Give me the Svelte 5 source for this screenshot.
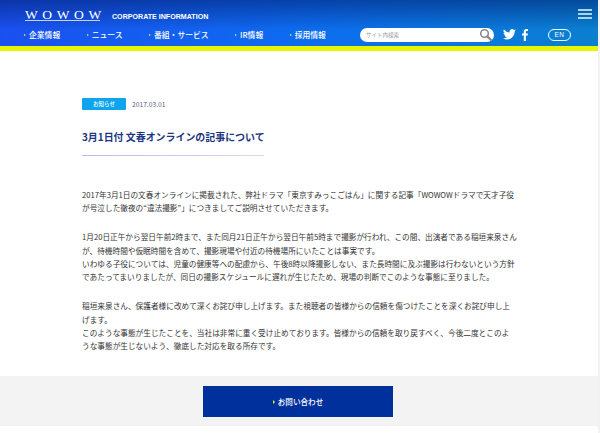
<script>
	const nav = ['企業情報', 'ニュース', '番組・サービス', 'IR情報', '採用情報']
</script>

<div class="page">
	<header class="header">
		<div class="header__top">
			<span class="logo">WOWOW</span>
			<span class="corp">CORPORATE INFORMATION</span>
			<div class="burger" aria-label="メニュー"><i></i><i></i><i></i></div>
		</div>
		<div class="header__nav">
			<ul class="nav">
				{#each nav as item}
					<li class="nav__item">{item}</li>
				{/each}
			</ul>
			<div class="search">
				<span>サイト内検索</span>
				<svg width="13" height="13" viewBox="0 0 13 13" fill="none" stroke="#8a8a8a">
					<circle cx="5.5" cy="5.5" r="3.8" stroke-width="1.6" />
					<path d="M8.4 8.4 L12 12" stroke-width="2.2" stroke-linecap="round" />
				</svg>
			</div>
			<svg class="tw" width="13" height="11" viewBox="0 0 24 20" fill="#fff">
				<path d="M24 2.4a9.800 9.800 0 0 1-2.800.8 4.900 4.900 0 0 0 2.150-2.700 9.800 9.800 0 0 1-3.100 1.200A4.900 4.900 0 0 0 11.900 6.100 13.900 13.900 0 0 1 1.700.9a4.900 4.900 0 0 0 1.500 6.500 4.900 4.900 0 0 1-2.200-.6c0 2.400 1.700 4.400 3.900 4.900a4.900 4.900 0 0 1-2.200.1 4.900 4.900 0 0 0 4.600 3.400A9.900 9.900 0 0 1 0 16.700 13.900 13.900 0 0 0 7.500 19c9.100 0 14.300-7.700 14-14.600A10 10 0 0 0 24 2.400z" />
			</svg>
			<svg class="fb" width="6" height="12" viewBox="0 0 10 20" fill="#fff">
				<path d="M6.500 20V11h3l.5-3.600H6.500V5.200c0-1 .3-1.700 1.800-1.700H10V.2C9.700.1 8.600 0 7.400 0 4.800 0 3 1.600 3 4.500v2.900H0V11h3v9z" />
			</svg>
			<span class="lang">EN</span>
		</div>
	</header>

	<main class="article">
		<div class="meta">
			<span class="badge">お知らせ</span>
			<span class="date">2017.03.01</span>
		</div>
		<h1 class="title">3月1日付 文春オンラインの記事について</h1>
		<div class="rule"></div>
		<div class="body">
			<p>2017年3月1日の文春オンラインに掲載された、弊社ドラマ「東京すみっこごはん」に関する記事「WOWOWドラマで天才子役が号泣した徹夜の“違法撮影”」につきましてご説明させていただきます。</p>
			<p>1月20日正午から翌日午前2時まで、また同月21日正午から翌日午前5時まで撮影が行われ、この間、出演者である稲垣来泉さんが、待機時間や仮眠時間を含めて、撮影現場や付近の待機場所にいたことは事実です。<br />いわゆる子役については、児童の健康等への配慮から、午後8時以降撮影しない、また長時間に及ぶ撮影は行わないという方針であたってまいりましたが、同日の撮影スケジュールに遅れが生じたため、現場の判断でこのような事態に至りました。</p>
			<p>稲垣来泉さん、保護者様に改めて深くお詫び申し上げます。また視聴者の皆様からの信頼を傷つけたことを深くお詫び申し上げます。<br />このような事態が生じたことを、当社は非常に重く受け止めております。皆様からの信頼を取り戻すべく、今後二度とこのよ<br />うな事態が生じないよう、徹底した対応を取る所存です。</p>
		</div>
	</main>

	<footer class="contact">
		<div class="contact__btn">お問い合わせ</div>
	</footer>
</div>

<style>
	:global(body) {
		margin: 0;
		background: #fff;
		font-family: 'Noto Sans CJK JP', 'Noto Sans', sans-serif;
		overflow: hidden;
	}

	.page {
		width: 598px;
		height: 433px;
		border-right: 2px solid #f2f2f2;
	}

	.header {
		height: 46px;
		background-image: linear-gradient(180deg, rgba(0, 30, 110, 0.55) 0%, rgba(0, 30, 110, 0) 65%), linear-gradient(90deg, #1a50f0 0%, #0d6cf0 50%, #0a80d0 100%);
		border-bottom: 5px solid #e6f500;
		color: #fff;
	}

	.header__top {
		height: 24px;
		display: flex;
		align-items: flex-end;
		padding-left: 25px;
		position: relative;
	}

	.logo {
		font-family: 'Liberation Serif', serif;
		font-size: 13.5px;
		letter-spacing: 4.6px;
		line-height: 11px;
		border-bottom: 1px solid rgba(255, 255, 255, 0.75);
		margin-bottom: 3px;
		width: 75px;
		white-space: nowrap;
	}

	.corp {
		font-family: 'Liberation Sans', sans-serif;
		font-size: 7.1px;
		font-weight: 700;
		margin-left: 12px;
		line-height: 8px;
		margin-bottom: 3px;
	}

	.burger {
		position: absolute;
		right: 6px;
		top: 9px;
		width: 14px;
		display: flex;
		flex-direction: column;
		gap: 2.5px;
	}

	.burger i {
		display: block;
		height: 1.5px;
		background: #a8d4ee;
	}

	.header__nav {
		height: 21px;
		display: flex;
		align-items: center;
		padding-left: 24px;
	}

	.nav {
		list-style: none;
		margin: 0;
		padding: 0;
		display: flex;
		width: 336px;
		gap: 26.500px;
	}

	.nav__item {
		font-size: 7.800px;
		font-weight: 500;
		white-space: nowrap;
		padding-left: 5px;
		position: relative;
	}

	.nav__item::before {
		content: '';
		position: absolute;
		left: 0;
		top: 5px;
		border-left: 2px solid #d8f060;
		border-top: 1.5px solid transparent;
		border-bottom: 1.5px solid transparent;
	}

	.search {
		width: 134px;
		height: 14px;
		background: #fff;
		border-radius: 7px;
		display: flex;
		align-items: center;
		justify-content: space-between;
		padding: 0 2px 0 6px;
		box-sizing: border-box;
		color: #999;
		font-size: 5.500px;
	}

	.tw {
		margin-left: 9px;
	}

	.fb {
		margin-left: 6px;
	}

	.lang {
		margin-left: 20px;
		width: 21px;
		height: 10px;
		border: 1px solid #fff;
		border-radius: 6px;
		font-family: 'Liberation Sans', sans-serif;
		font-size: 6.500px;
		letter-spacing: 0.5px;
		display: flex;
		align-items: center;
		justify-content: center;
	}

	.article {
		padding: 47px 82px 0;
		height: 278px;
	}

	.meta {
		display: flex;
		align-items: center;
		height: 12px;
	}

	.badge {
		width: 44px;
		height: 12px;
		background: #0fa5ee;
		border-radius: 1px;
		color: #fff;
		font-size: 5.500px;
		font-weight: 500;
		display: flex;
		align-items: center;
		justify-content: center;
	}

	.date {
		margin-left: 6px;
		color: #5a6488;
		font-size: 6.700px;
	}

	.title {
		margin: 19px 0 0;
		color: #1b3580;
		font-size: 9.950px;
		font-weight: 700;
		line-height: 16px;
	}

	.rule {
		margin-top: 10px;
		width: 182px;
		height: 1px;
		background: linear-gradient(90deg, #b9bde8, #d8daf0);
	}

	.body {
		margin-top: 32px;
		width: 435px;
		color: #333;
		font-size: 7.660px;
		line-height: 13.400px;
	}

	.body p {
		margin: 0 0 15.400px;
	}

	.contact {
		height: 50px;
		background: #f3f3f3;
		display: flex;
		justify-content: center;
		padding: 10px 2px 0 0;
		box-sizing: border-box;
	}

	.contact__btn {
		width: 190px;
		height: 31px;
		background: #00309c;
		color: #fff;
		font-size: 7.600px;
		font-weight: 500;
		display: flex;
		align-items: center;
		justify-content: center;
		gap: 3px;
	}

	.contact__btn::before {
		content: '';
		border-left: 2px solid #e6f500;
		border-top: 2px solid transparent;
		border-bottom: 2px solid transparent;
	}
</style>
